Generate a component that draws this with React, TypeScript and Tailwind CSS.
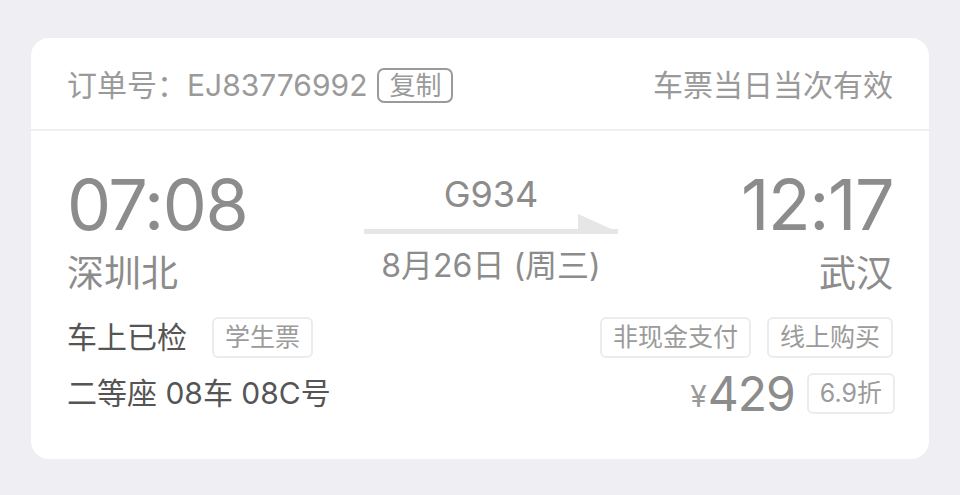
const FONT = "font-['Inter','Noto_Sans_CJK_SC',sans-serif]";

const Tag = ({ children, className = "" }: { children: React.ReactNode; className?: string }) => (
  <span
    className={`inline-flex items-center h-[41px] px-[11px] border-2 border-[#ececec] rounded-[6px] text-[25px] text-[#9b9b9b] leading-none ${className}`}
  >
    {children}
  </span>
);

const Arrow = () => (
  <svg width="254" height="22" viewBox="0 0 254 22" className="block">
    <rect x="0" y="15" width="254" height="5" fill="#e6e6e6" />
    <polygon points="214,0 254,18 214,18" fill="#e6e6e6" />
  </svg>
);

export default function App() {
  return (
    <div className={`w-[960px] h-[495px] bg-[#efeef3] pt-[38px] pl-[31px] ${FONT}`}>
      <div className="w-[898px] h-[421px] bg-white rounded-[18px] overflow-hidden">
        {/* header */}
        <div className="h-[93px] pt-[4px] flex items-center justify-between px-[36px] border-b-2 border-[#efefef]">
          <div className="flex items-center text-[30px] text-[#9a9a9a]">
            <span>订单号：EJ83776992</span>
            <span className="ml-[10px] inline-flex items-center h-[35px] px-[10px] border-2 border-[#9a9a9a] rounded-[7px] text-[26px] leading-none">
              复制
            </span>
          </div>
          <span className="text-[30px] text-[#9a9a9a]">车票当日当次有效</span>
        </div>

        {/* body */}
        <div className="pl-[36px] pr-[34px] pt-[39px]">
          <div className="flex items-start justify-between">
            <div className="flex flex-col w-[200px]">
              <span className="text-[70px] leading-[70px] tracking-[-1.5px] text-[#8c8c8c]">07:08</span>
              <span className="mt-[14px] text-[37px] leading-[40px] text-[#8c8c8c]">深圳北</span>
            </div>
            <div className="flex flex-col items-center pt-[4px] ml-[20px]">
              <span className="text-[36px] leading-[40px] text-[#8c8c8c]">G934</span>
              <Arrow />
              <span className="mt-[11px] text-[32px] leading-[38px] text-[#8c8c8c]">8月26日 (周三)</span>
            </div>
            <div className="flex flex-col items-end w-[200px] pr-[2px]">
              <span className="text-[70px] leading-[70px] tracking-[-1.5px] text-[#8c8c8c]">12:17</span>
              <span className="mt-[14px] text-[37px] leading-[40px] text-[#8c8c8c]">武汉</span>
            </div>
          </div>

          <div className="mt-[21px] flex items-center justify-between">
            <div className="flex items-center">
              <span className="text-[30px] text-[#555]">车上已检</span>
              <Tag className="ml-[25px]">学生票</Tag>
            </div>
            <div className="flex items-center gap-[16px] pr-[2px]">
              <Tag>非现金支付</Tag>
              <Tag>线上购买</Tag>
            </div>
          </div>

          <div className="mt-[8px] flex items-center justify-between">
            <span className="text-[30px] text-[#555]">二等座 08车 08C号</span>
            <div className="flex items-center">
              <span className="text-[30px] text-[#9b9b9b] mt-[6px]">¥</span>
              <span className="ml-[1px] text-[48px] leading-[50px] tracking-[-1px] text-[#8c8c8c]">429</span>
              <Tag className="ml-[12px] h-[35px] px-[9px]">6.9折</Tag>
            </div>
          </div>
        </div>
      </div>
    </div>
  );
}
